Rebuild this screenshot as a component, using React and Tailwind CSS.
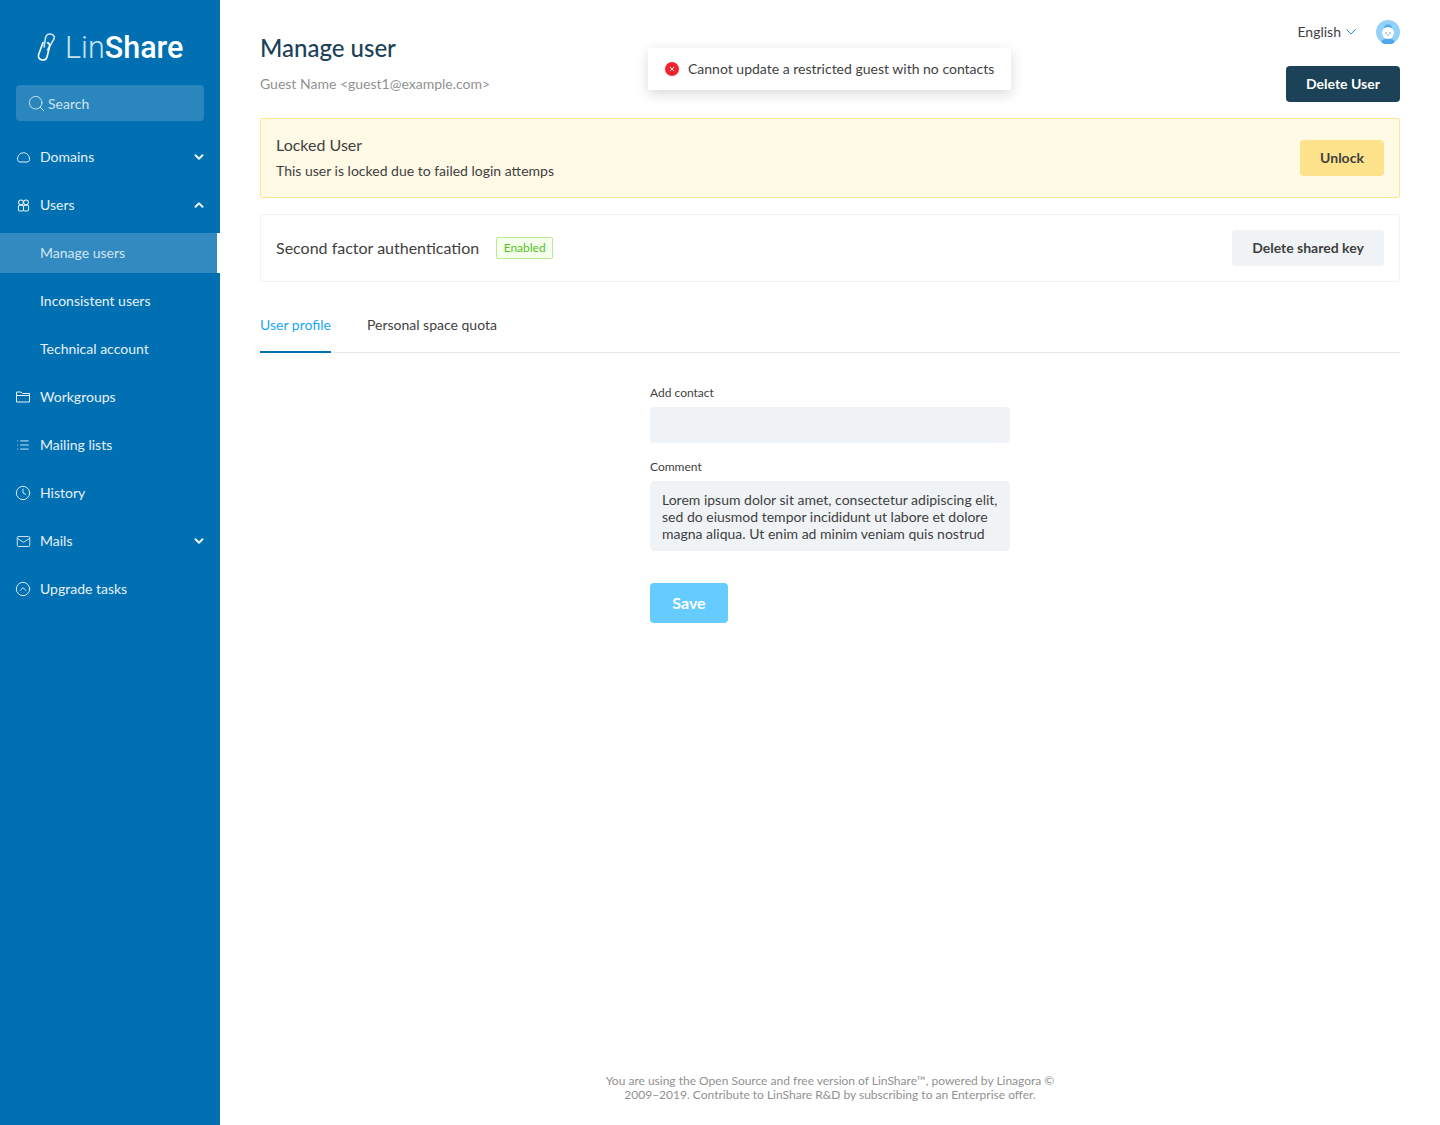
import React from 'react';
import { ChevronDown, ChevronUp, Search, List, Clock, Mail, CircleChevronUp } from 'lucide-react';

const CloudIcon = () => (
    <svg width="13" height="11" viewBox="0 0 13 11" fill="none" stroke="currentColor" strokeWidth="1">
        <path d="M3 10 C1.2 10 .5 8.6 .5 7.4 C.5 3.4 3.2 .8 6.5 .8 C9.8 .8 12.5 3.4 12.5 7.4 C12.5 8.8 11.8 10 10 10 Z" />
    </svg>
);

const FolderIcon = () => (
    <svg width="14" height="12" viewBox="0 0 14 12" fill="none" stroke="currentColor" strokeWidth="1">
        <path d="M.5 1 H5 L6.5 2.5 H13.5 V11 H.5 Z" />
        <path d="M.5 4.5 H13.5" />
    </svg>
);

const UsersIcon = () => (
    <svg width="13" height="13" viewBox="0 0 14 14" fill="none" stroke="currentColor" strokeWidth="1.1">
        <circle cx="4.3" cy="3.6" r="2.6" />
        <circle cx="9.7" cy="3.6" r="2.6" />
        <rect x="1.5" y="6.8" width="5.5" height="6" rx="1.5" />
        <rect x="7" y="6.8" width="5.5" height="6" rx="1.5" />
    </svg>
);

const LinkLogo = () => (
    <svg width="19" height="28" viewBox="0 0 19 28" fill="none" strokeWidth="1.6" strokeLinecap="round">
        <path d="M7 14 L8.5 5 C9 2 11 .8 13.5 1 C16.5 1.3 18 3.5 17 6 L10.5 17" stroke="#c9e2f1" />
        <path d="M6 9.5 L1.8 21 C.8 24 2 26.5 5 27 C7.5 27.3 9.5 26 10 24 L12.5 14 C13 11.5 11.5 9.5 10.5 10" stroke="white" />
    </svg>
);

const Avatar = () => (
    <svg width="24" height="24" viewBox="0 0 24 24">
        <circle cx="12" cy="12" r="12" fill="#92d2fa" />
        <path d="M5 22 C6 17.5 18 17.5 19 22 L16 24 H8 Z" fill="#4fa8ec" />
        <path d="M8 8 C9 3 15 3 16 8 Z" fill="#4fa8ec" />
        <circle cx="12" cy="13" r="6" fill="white" />
        <circle cx="10" cy="13" r="0.7" fill="#4a7ea8" />
        <circle cx="14" cy="13" r="0.7" fill="#4a7ea8" />
        <path d="M11 15 H13" stroke="#4a7ea8" strokeWidth="0.6" />
    </svg>
);

const NavItem = ({ icon, label, arrow, active, sub }) => (
    <div className={`relative flex h-10 items-center mb-2 pr-4 ${sub ? 'pl-10' : 'pl-4'} ${active ? 'bg-[#338ac0] text-[#d3e6f2]' : 'text-[#e6f1f8]'}`}>
        {icon && <span className="mr-[10px] flex w-[14px] justify-center">{icon}</span>}
        <span>{label}</span>
        {arrow === 'down' && <ChevronDown size={14} strokeWidth={3.5} className="ml-auto mr-[-2px] text-[#e6f1f8]" />}
        {arrow === 'up' && <ChevronUp size={14} strokeWidth={3.5} className="ml-auto mr-[-2px] text-[#e6f1f8]" />}
        {active && <span className="absolute right-0 top-0 h-10 w-[3px] bg-white" />}
    </div>
);

const App = () => {
    return (
        <div className="relative flex min-h-[1125px] font-['Lato','Noto_Sans',sans-serif] text-sm text-[#3f3f3f]">
            {/* sidebar */}
            <aside className="w-[220px] shrink-0 bg-[#0070b3] text-sm">
                <div className="flex h-[85px] items-start pl-[37px] pt-[33px]">
                    <LinkLogo />
                    <span className="ml-[9px] text-[30.5px] leading-[30px] font-['Roboto',sans-serif] text-[#c9e2f1] font-light">
                        Lin<span className="font-medium text-white">Share</span>
                    </span>
                </div>
                <div className="mx-4 flex h-9 items-center rounded-[4px] bg-[#2b86bd] pl-[11px] text-[#cfe4f1]">
                    <Search size={19} strokeWidth={1.2} className="mr-[2px] shrink-0" />
                    <span className="mt-[2px]">Search</span>
                </div>
                <nav className="mt-4">
                    <NavItem icon={<CloudIcon />} label="Domains" arrow="down" />
                    <NavItem icon={<UsersIcon />} label="Users" arrow="up" />
                    <NavItem sub active label="Manage users" />
                    <NavItem sub label="Inconsistent users" />
                    <NavItem sub label="Technical account" />
                    <NavItem icon={<FolderIcon />} label="Workgroups" />
                    <NavItem icon={<List size={14} strokeWidth={1.5} className="shrink-0" />} label="Mailing lists" />
                    <NavItem icon={<Clock size={16} strokeWidth={1.4} className="shrink-0" />} label="History" />
                    <NavItem icon={<Mail size={15} strokeWidth={1.4} className="shrink-0" />} label="Mails" arrow="down" />
                    <NavItem icon={<CircleChevronUp size={16} strokeWidth={1.4} className="shrink-0" />} label="Upgrade tasks" />
                </nav>
            </aside>

            {/* main */}
            <main className="flex flex-1 flex-col pl-10 pr-10">
                <div className="flex items-start justify-between">
                    <div className="pt-[30px]">
                        <h1 className="text-2xl leading-9 font-medium text-[#1b4257]">Manage user</h1>
                        <p className="mt-[7px] leading-[22px] text-[#919191]">Guest Name &lt;guest1@example.com&gt;</p>
                    </div>
                    <div className="flex flex-col items-end pt-5">
                        <div className="flex h-6 items-center">
                            <span>English</span>
                            <svg width="10" height="6" viewBox="0 0 10 6" fill="none" stroke="#1890d8" strokeWidth="1" className="ml-[5px]">
                                <path d="M.5 .5 L5 5 L9.5 .5" />
                            </svg>
                            <span className="ml-5"><Avatar /></span>
                        </div>
                        <button className="mt-[22px] h-9 w-[114px] rounded-[4px] bg-[#1b4257] font-bold text-white">Delete User</button>
                    </div>
                </div>

                <div className="mt-4 flex h-20 items-center justify-between rounded-[2px] border border-[#ffe58f] bg-[#fffae6] pl-[15px] pr-[15px]">
                    <div className="mb-[2px]">
                        <div className="text-base leading-6">Locked User</div>
                        <div className="mt-[3px] leading-[22px]">This user is locked due to failed login attemps</div>
                    </div>
                    <button className="h-9 w-[84px] rounded-[4px] bg-[#ffe28c] font-bold">Unlock</button>
                </div>

                <div className="mt-4 flex h-[68px] items-center justify-between rounded-[2px] border border-[#f0f2f5] pl-[15px] pr-[15px]">
                    <div className="flex items-center">
                        <span className="text-base">Second factor authentication</span>
                        <span className="ml-[17px] flex h-[22px] w-[57px] items-center justify-center rounded-[2px] border border-[#b7eb8f] bg-[#f6ffed] text-xs text-[#52c41a]">Enabled</span>
                    </div>
                    <button className="h-9 w-[152px] rounded-[4px] bg-[#f0f3f6] font-bold">Delete shared key</button>
                </div>

                <div className="mt-4 flex h-[55px] items-stretch border-b border-[#e8e8e8]">
                    <div className="mb-[-1px] flex items-center border-b-2 border-[#0070b3] text-[#1ba9f5]">User profile</div>
                    <div className="ml-9 flex items-center">Personal space quota</div>
                </div>

                <div className="mx-auto mt-8 w-[360px]">
                    <label className="block text-xs leading-4">Add contact</label>
                    <div className="mt-[6px] h-9 rounded-[4px] bg-[#f0f3f6]" />
                    <label className="mt-4 block text-xs leading-4">Comment</label>
                    <div className="mt-[6px] rounded-[4px] bg-[#f0f3f6] px-3 pt-[10px] pb-[9px] leading-[17px]">
                        Lorem ipsum dolor sit amet, consectetur adipiscing elit, sed do eiusmod tempor incididunt ut labore et dolore magna aliqua. Ut enim ad minim veniam quis nostrud
                    </div>
                    <button className="mt-8 h-10 w-[78px] rounded-[4px] bg-[#66ccff] text-base font-bold text-white">Save</button>
                </div>

                <footer className="mx-auto mt-auto mb-[23px] w-[470px] text-center text-xs leading-[14px] text-[#919191]">
                    You are using the Open Source and free version of LinShare™, powered by Linagora © 2009–2019. Contribute to LinShare R&amp;D by subscribing to an Enterprise offer.
                </footer>
            </main>

            {/* toast */}
            <div className="absolute left-[648px] top-12 flex h-[42px] w-[363px] items-center bg-white pl-[17px] shadow-[0_4px_12px_rgba(0,0,0,0.15)]">
                <span className="flex h-[14px] w-[14px] items-center justify-center rounded-full bg-[#f5222d] text-white">
                    <svg width="6" height="6" viewBox="0 0 6 6" stroke="currentColor" strokeWidth="1"><path d="M1 1 L5 5 M5 1 L1 5" /></svg>
                </span>
                <span className="ml-[9px]">Cannot update a restricted guest with no contacts</span>
            </div>
        </div>
    );
};

export default App;
